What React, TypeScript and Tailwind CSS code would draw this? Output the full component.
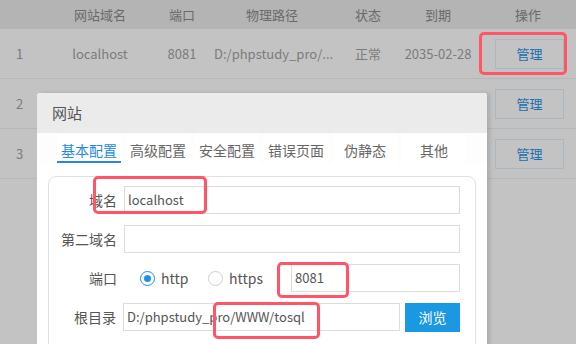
import React from 'react';

const font = { fontFamily: '"Noto Sans CJK SC", "Noto Sans", sans-serif' };

const rows = [
    { id: 1, domain: 'localhost', port: '8081', path: 'D:/phpstudy_pro/...', status: '正常', expire: '2035-02-28' },
    { id: 2 },
    { id: 3 },
];

const tabs = ['基本配置', '高级配置', '安全配置', '错误页面', '伪静态', '其他'];

const cols = 'grid grid-cols-[50px_100px_64px_116px_76px_64px_1fr] items-center';

const Mark = ({ className }: { className: string }) => (
    <div className={`absolute border-[3px] border-[#ff5567] rounded-[5px] ${className}`} />
);

const Field = ({ label, children }: { label: string; children: React.ReactNode }) => (
    <div className="flex items-center h-[28px]">
        <div className="w-[69px] pr-[1px] text-right text-[14px] text-[#555]">{label}</div>
        <div className="flex-1 ml-[6px] flex items-center h-full">{children}</div>
    </div>
);

const Input = ({ value, className = '' }: { value?: string; className?: string }) => (
    <div className={`h-[28px] border border-[#dcdcdc] bg-white px-[3px] text-[13px] leading-[26px] text-[#555] ${className}`}>
        {value}
    </div>
);

const Radio = ({ checked, label }: { checked?: boolean; label: string }) => (
    <div className="flex items-center">
        <span className={`w-[15px] h-[15px] rounded-full border flex items-center justify-center ${checked ? 'border-[#1e90e6]' : 'border-[#cfcfcf]'}`}>
            {checked && <span className="w-[7px] h-[7px] rounded-full bg-[#1e90e6]" />}
        </span>
        <span className="ml-[6px] text-[14px] text-[#555]">{label}</span>
    </div>
);

export default function App() {
    return (
        <div className="relative w-[576px] h-[344px] overflow-hidden bg-[#c3c3c3]" style={font}>
            {/* background table, dimmed by the modal mask */}
            <div className={`${cols} h-[29px] bg-[#b4b4b4] text-[13px] text-[#6a6a6a]`}>
                <div />
                <div className="text-center">网站域名</div>
                <div className="text-center">端口</div>
                <div className="text-center">物理路径</div>
                <div className="text-center">状态</div>
                <div className="text-center">到期</div>
                <div className="text-center pl-[10px]">操作</div>
            </div>
            {rows.map(r => (
                <div key={r.id} className={`${cols} h-[50px] border-b border-[#b7b7b7] text-[13px] text-[#7b7b7b] whitespace-nowrap`}>
                    <div className="pl-[16px]">{r.id}</div>
                    <div className="text-center">{r.domain}</div>
                    <div className="text-center">{r.port}</div>
                    <div className="text-center">{r.path}</div>
                    <div className="text-center">{r.status}</div>
                    <div className="flex justify-center">{r.expire}</div>
                    <div className="pl-[25px]">
                        <div className="w-[69px] h-[30px] border border-[#a8b7c2] text-[13px] leading-[28px] text-center text-[#1b6fae]">管理</div>
                    </div>
                </div>
            ))}

            {/* modal */}
            <div className="absolute left-[37px] top-[93px] w-[450px] h-[300px] bg-white rounded-[3px] shadow-[3px_0_4px_rgba(0,0,0,0.12)]">
                <div className="h-[40px] bg-[#ebebeb] rounded-t-[3px] pl-[15px] text-[15px] leading-[40px] text-[#555]">网站</div>
                <div className="flex pl-[20px] bg-[#fdfdfd]">
                    {tabs.map((t, i) => (
                        <div
                            key={t}
                            className={`w-[64px] mr-[5px] bg-white pt-[7px] pb-[1px] leading-[20px] text-center text-[14px] border-b-2 ${i === 0 ? 'border-[#2489df] text-[#2489df]' : 'border-transparent text-[#666]'}`}
                        >
                            {t}
                        </div>
                    ))}
                </div>
                <div className="mx-[11px] mt-[13px] border border-[#e0e0e0] rounded-[8px] pt-[9px] pr-[15px] flex flex-col gap-[11px] h-[200px]">
                    <Field label="域名"><Input value="localhost" className="flex-1" /></Field>
                    <Field label="第二域名"><Input className="flex-1" /></Field>
                    <Field label="端口">
                        <div className="pl-[16px] w-[167px] flex items-center justify-between pr-[28px]">
                            <Radio checked label="http" />
                            <Radio label="https" />
                        </div>
                        <Input value="8081" className="flex-1" />
                    </Field>
                    <Field label="根目录">
                        <Input value="D:/phpstudy_pro/WWW/tosql" className="w-[277px]" />
                        <div className="ml-[5px] w-[55px] h-[29px] bg-[#1a98e2] text-white text-[14px] leading-[29px] text-center">浏览</div>
                    </Field>
                </div>
            </div>

            {/* annotation boxes */}
            <Mark className="left-[479px] top-[32px] w-[88px] h-[43px]" />
            <Mark className="left-[93px] top-[176px] w-[114px] h-[38px]" />
            <Mark className="left-[277px] top-[262px] w-[72px] h-[36px]" />
            <Mark className="left-[213px] top-[302px] w-[107px] h-[37px]" />
        </div>
    );
}
